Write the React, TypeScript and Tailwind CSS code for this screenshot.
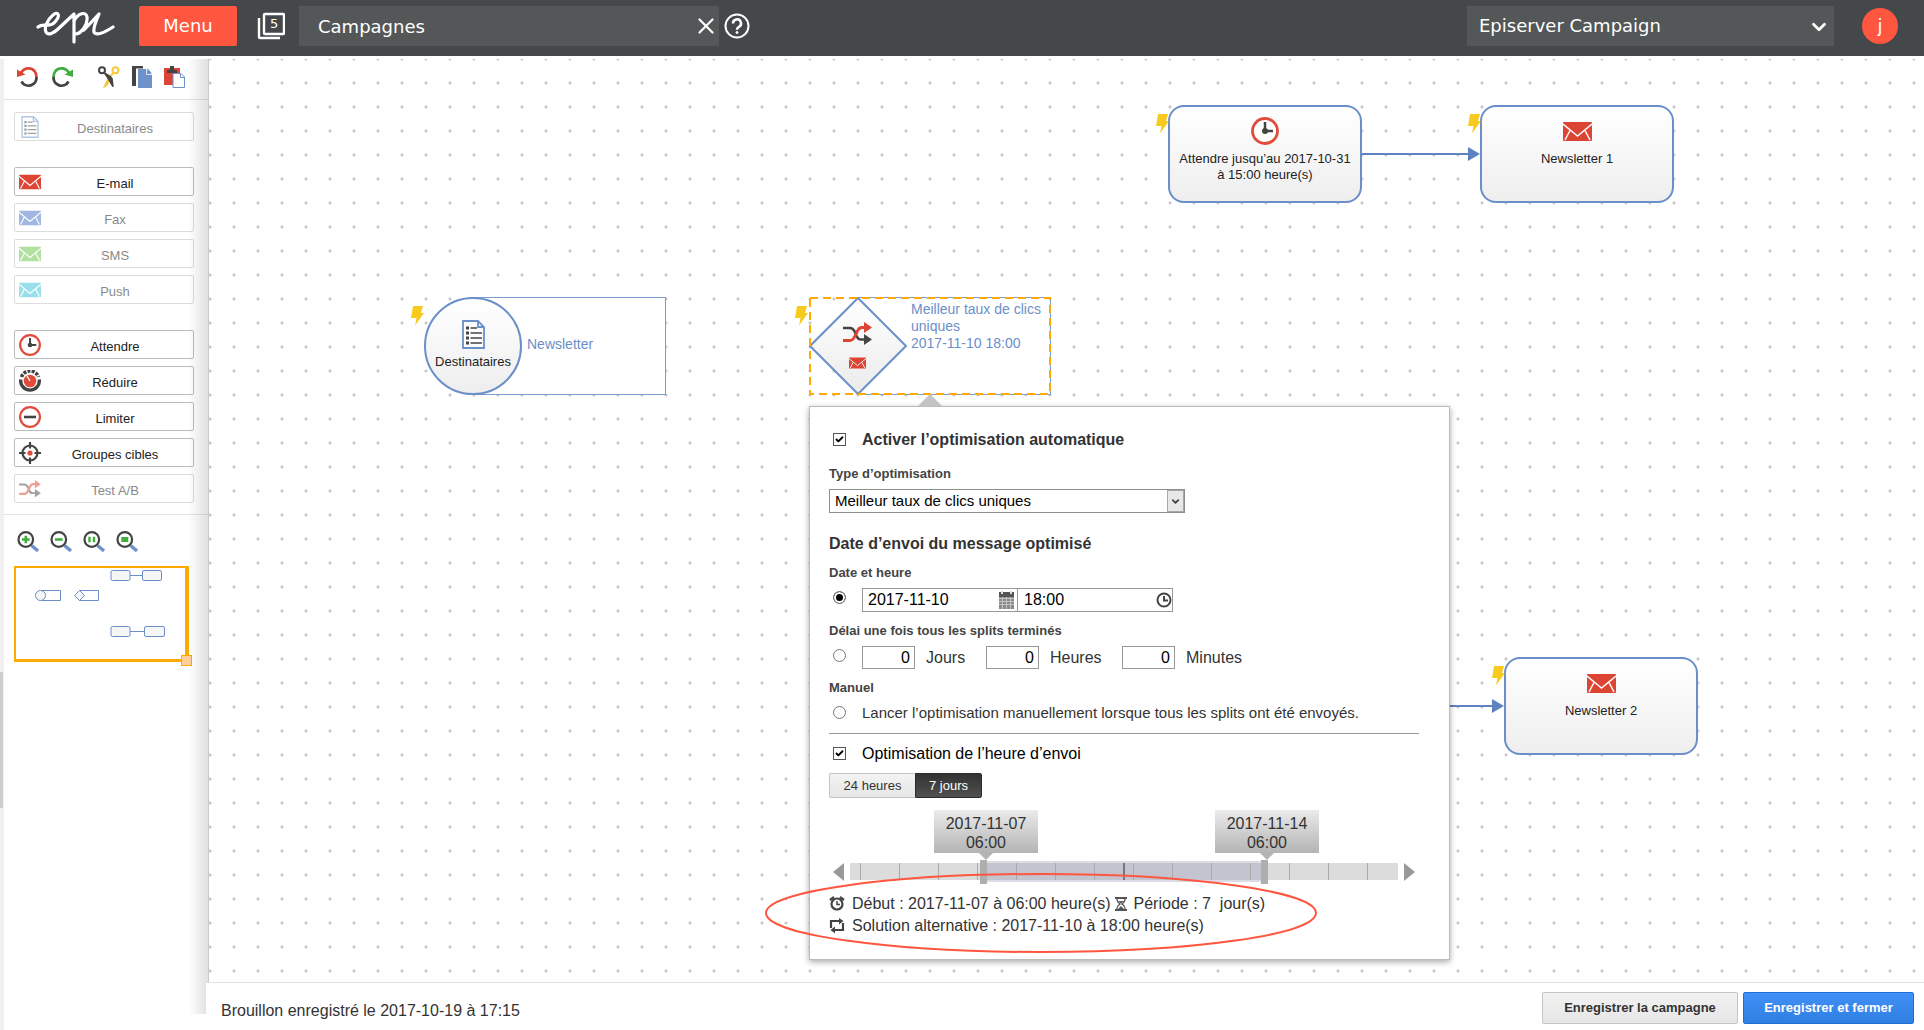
import React from "react";
import { Check, ChevronDown, X } from "lucide-react";

type IconProps = { className?: string };

/* ---------- Icons ---------- */

function Logo() {
  return (
    <svg width="80" height="34" viewBox="0 0 80 34" fill="none" stroke="#fff" strokeWidth="3.200" strokeLinecap="round" strokeLinejoin="round" aria-hidden="true">
      <path d="M2 16C8 11 13 18 19 11C25 4 22 0 17 4C11 9 8 17 10 21C12 25 18 22 22 18L38 3L38 31M38 10C42 2 50 0 51 6C52 13 46 22 40 23M48 19L63 3C59 12 57 17 58 21C60 25 68 22 77 16" />
    </svg>
  );
}

function TabsIcon() {
  return (
    <svg width="28" height="28" viewBox="0 0 28 28" fill="none" stroke="#fff" strokeWidth="2.400" aria-hidden="true">
      <rect x="7" y="2" width="20" height="20" rx="1" />
      <path d="M2 6V25a1 1 0 0 0 1 1H23" />
    </svg>
  );
}

function HelpIcon() {
  return (
    <svg width="26" height="26" viewBox="0 0 26 26" fill="none" stroke="#fff" strokeWidth="2" aria-hidden="true">
      <circle cx="13" cy="13" r="11.500" />
      <path d="M9 10.500a4 4 0 1 1 6 3.300c-1.500 1-2 1.500-2 3" strokeWidth="2.500" />
      <circle cx="13" cy="19.500" r="1" strokeWidth="1" fill="#fff" />
    </svg>
  );
}

function RotateIcon({ color, flip }: { color: string; flip?: boolean }) {
  return (
    <svg width="22" height="22" viewBox="0 0 22 22" fill="none" strokeWidth="2.800" aria-hidden="true">
      <g transform={flip ? "translate(22 0) scale(-1 1)" : undefined}>
        <path d="M4.500 15.500A8 8 0 0 0 19.500 11" stroke="#444" />
        <path d="M4 7C7 1.500 14 1 17.500 5Q19.500 7.500 19.500 11" stroke={color} />
        <path d="M0 3.500V11L8.500 8.500Z" fill={color} />
      </g>
    </svg>
  );
}

function ScissorsIcon() {
  return (
    <svg width="22" height="22" viewBox="0 0 22 22" fill="none" aria-hidden="true">
      <path d="M15 7L10.500 12L6.500 20.500L9 19L12.500 12Z" fill="#f9c63d" stroke="#f9c63d" strokeWidth="1.500" />
      <path d="M6.500 7L10 12L15 20.500L14 12.500L11.500 10Z" fill="#444" stroke="#444" strokeWidth="1.500" />
      <circle cx="4" cy="4.200" r="3" stroke="#444" strokeWidth="2" />
      <circle cx="17.500" cy="4.200" r="3" stroke="#f9c63d" strokeWidth="2" />
    </svg>
  );
}

function CopyIcon() {
  return (
    <svg width="22" height="22" viewBox="0 0 22 22" aria-hidden="true">
      <path d="M0 0H11V2.500H4V20H0Z" fill="#444" />
      <path d="M6 3H14L20 9V22H6Z" fill="#6f92cb" />
      <path d="M15.500 2L20 7.500H15.500Z" fill="#6f92cb" />
      <path d="M14.500 3V8.500H20" fill="none" stroke="#dfe8f5" />
    </svg>
  );
}

function PasteIcon() {
  return (
    <svg width="22" height="22" viewBox="0 0 22 22" aria-hidden="true">
      <path d="M0 2H16V19H0Z" fill="#dc4433" />
      <path d="M3 7V4H6V0H10V4H13V7Z" fill="#444" />
      <path d="M9 7.500H17L20.500 11V21.500H9Z" fill="#fff" stroke="#6f92cb" />
      <path d="M16.500 7.500V11.500H20.500" fill="none" stroke="#6f92cb" />
    </svg>
  );
}

function ListDocIcon({ className }: IconProps) {
  return (
    <svg className={className} viewBox="0 0 23 29" fill="none" aria-hidden="true">
      <path d="M1 1H16L22 7V28H1Z" fill="#fdfdfd" stroke="#6b8fc9" strokeWidth="1.800" />
      <path d="M16 1V7H22" stroke="#6b8fc9" strokeWidth="1.800" />
      <path d="M8.500 8H15M8.500 13H20M8.500 18H20M8.500 23H20" stroke="#444" strokeWidth="1.600" />
      <path d="M4 8H7M4 13H7M4 18H7M4 23H7" stroke="#444" strokeWidth="3" />
    </svg>
  );
}

function MailIcon({ className, color = "#dc4433" }: IconProps & { color?: string }) {
  return (
    <svg className={className} viewBox="0 0 29 19" fill="none" aria-hidden="true">
      <rect width="29" height="19" rx="1" fill={color} />
      <path d="M0 2L14.500 14L29 2" stroke="#fff" strokeWidth="1.500" />
      <path d="M7 8.500L2 18M22 8.500L27 18" stroke="#fff" strokeWidth="1.500" />
    </svg>
  );
}

function ClockIcon({ className }: IconProps) {
  return (
    <svg className={className} viewBox="0 0 28 28" fill="none" aria-hidden="true">
      <circle cx="14" cy="14" r="12.500" fill="#fff" stroke="#e04b3a" strokeWidth="2.800" />
      <path d="M14 5V14H22" stroke="#444" strokeWidth="2.500" />
      <circle cx="14" cy="14" r="3" fill="#444" />
    </svg>
  );
}

function ReduceIcon({ className }: IconProps) {
  return (
    <svg className={className} viewBox="0 0 22 22" fill="none" aria-hidden="true">
      <path d="M1.800 9.500A9.300 9.300 0 1 0 20.200 9.500" stroke="#444" strokeWidth="3.400" />
      <path d="M2.500 7A9 9 0 0 1 19.500 7" stroke="#444" strokeWidth="3.600" strokeDasharray="3 1.200" />
      <circle cx="11" cy="11" r="6.300" fill="#e04b3a" />
      <path d="M11 11L8 6" stroke="#fff" strokeWidth="1.300" />
    </svg>
  );
}

function LimitIcon({ className }: IconProps) {
  return (
    <svg className={className} viewBox="0 0 22 22" fill="none" aria-hidden="true">
      <circle cx="11" cy="11" r="9.900" stroke="#e04b3a" strokeWidth="2.200" />
      <path d="M5 11H17" stroke="#444" strokeWidth="2.600" />
    </svg>
  );
}

function TargetIcon({ className }: IconProps) {
  return (
    <svg className={className} viewBox="0 0 22 22" fill="none" aria-hidden="true">
      <circle cx="11" cy="11" r="7.500" stroke="#444" strokeWidth="2.200" />
      <path d="M11 0V6.500M11 15.500V22M0 11H6.500M15.500 11H22" stroke="#444" strokeWidth="2.200" />
      <circle cx="11" cy="11" r="2.600" fill="#e04b3a" />
    </svg>
  );
}

function ShuffleIcon({ className }: IconProps) {
  return (
    <svg className={className} viewBox="0 0 29 24" fill="none" aria-hidden="true">
      <path d="M0 6H7Q10 6 12 10L13.500 14Q15 17.500 18 17.500H22" stroke="#444" strokeWidth="2.600" />
      <path d="M21 12L29 17.500L21 23Z" fill="#444" />
      <path d="M0 18.500H7Q10 18.500 12 14L14.500 9Q16 5.500 19 5.500H22" stroke="#dc4433" strokeWidth="2.800" />
      <path d="M21 0L29 5.500L21 11Z" fill="#dc4433" />
    </svg>
  );
}

function Bolt({ className }: IconProps) {
  return (
    <svg className={className} width="13" height="20" viewBox="0 0 13 20" aria-hidden="true">
      <path d="M2 0H12L10 7H13L4 19.500L5.500 12H0Z" fill="#f7ca20" />
    </svg>
  );
}

function ZoomIcon({ kind }: { kind: "in" | "out" | "actual" | "fit" }) {
  return (
    <svg width="22" height="22" viewBox="0 0 22 22" fill="none" aria-hidden="true">
      <path d="M14.500 14.500L21 20" stroke="#6f92cb" strokeWidth="3.400" />
      <circle cx="8.800" cy="8.500" r="7.300" fill="#fff" stroke="#444" strokeWidth="2.200" />
      {kind === "in" && <path d="M8.800 4.700V12.300M5 8.500H12.600" stroke="#3fae3f" strokeWidth="2.600" />}
      {kind === "out" && <path d="M5 8.500H12.600" stroke="#3fae3f" strokeWidth="2.600" />}
      {kind === "actual" && <path d="M6.500 5.800V11.200M11 5.800V11.200" stroke="#3fae3f" strokeWidth="2.400" />}
      {kind === "fit" && <rect x="5.300" y="6" width="7" height="5" fill="#3fae3f" />}
    </svg>
  );
}

function CalendarIcon({ className }: IconProps) {
  return (
    <svg className={className} width="15" height="18" viewBox="0 0 15 18" aria-hidden="true">
      <rect y="1" width="15" height="17" fill="#8a8a8a" />
      <rect y="1" width="15" height="5" fill="#555" />
      <path d="M3 0V3M12 0V3" stroke="#ddd" strokeWidth="2" />
      <path d="M0 7.500H15M0 10.500H15M0 13.500H15M3.500 6V18M7.500 6V18M11.500 6V18" stroke="#c4c4c4" strokeWidth="1" />
    </svg>
  );
}

function SmallClockIcon({ className }: IconProps) {
  return (
    <svg className={className} width="16" height="16" viewBox="0 0 16 16" fill="none" stroke="#444" aria-hidden="true">
      <circle cx="8" cy="8" r="6.500" strokeWidth="2" />
      <path d="M8 4V8.500H12" strokeWidth="2" />
    </svg>
  );
}

function AlarmIcon() {
  return (
    <svg width="16" height="16" viewBox="0 0 16 16" fill="none" stroke="#444" aria-hidden="true">
      <circle cx="8" cy="8" r="5.500" strokeWidth="2.200" />
      <path d="M8 5V8.500H11" strokeWidth="1.500" />
      <path d="M1 4L5 1M15 4L11 1" strokeWidth="2.200" />
    </svg>
  );
}

function HourglassIcon() {
  return (
    <svg width="12" height="15" viewBox="0 0 12 15" fill="none" stroke="#555" aria-hidden="true">
      <path d="M0 1H12M0 13H12" strokeWidth="2" />
      <path d="M2 2Q2 5 5 7Q2 9 2 12M10 2Q10 5 7 7Q10 9 10 12" strokeWidth="1.300" />
      <path d="M3.500 4H8.500L6 6.500ZM3 12L6 9L9 12Z" fill="#555" stroke="none" />
    </svg>
  );
}

function RepeatIcon() {
  return (
    <svg width="16" height="16" viewBox="0 0 16 16" fill="none" stroke="#444" strokeWidth="2.200" aria-hidden="true">
      <path d="M2 10V3H11M14 5V12H5" />
      <path d="M10 0L14.500 3L10 6.500ZM6 8.500L1.500 12L6 15.500Z" fill="#444" stroke="none" />
    </svg>
  );
}

/* ---------- Sidebar ---------- */

type Tool = { label: string; icon: React.ReactNode; disabled?: boolean };

const groups: Tool[][] = [
  [{ label: "Destinataires", icon: <ListDocIcon className="h-[22px] w-5" />, disabled: true }],
  [
    { label: "E-mail", icon: <MailIcon className="h-4 w-[22px]" /> },
    { label: "Fax", icon: <MailIcon className="h-4 w-[22px]" color="#4472c4" />, disabled: true },
    { label: "SMS", icon: <MailIcon className="h-4 w-[22px]" color="#66c244" />, disabled: true },
    { label: "Push", icon: <MailIcon className="h-4 w-[22px]" color="#38c3da" />, disabled: true },
  ],
  [
    { label: "Attendre", icon: <ClockIcon className="size-[22px]" /> },
    { label: "Réduire", icon: <ReduceIcon className="size-[22px]" /> },
    { label: "Limiter", icon: <LimitIcon className="size-[22px]" /> },
    { label: "Groupes cibles", icon: <TargetIcon className="size-[22px]" /> },
    { label: "Test A/B", icon: <ShuffleIcon className="h-[18px] w-[22px]" />, disabled: true },
  ],
];

function ToolButton({ label, icon, disabled }: Tool) {
  return (
    <button
      type="button"
      disabled={disabled}
      className="flex h-[29px] w-full items-center rounded-xs border border-[#bcbcbc] bg-white px-1 text-[13px] text-[#222] disabled:border-[#dcdcdc] disabled:text-[#8a8a8a]"
    >
      <span className={disabled ? "flex w-[22px] justify-center opacity-50" : "flex w-[22px] justify-center"}>{icon}</span>
      <span className="flex-1 pt-1 text-center leading-4">{label}</span>
    </button>
  );
}

function MiniMap() {
  return (
    <button type="button" aria-label="Vue d’ensemble" className="relative mt-[13px] ml-[10px] block w-[175px] border-t-2 border-r-4 border-b-3 border-l-2 border-[#fa0] bg-white">
      <svg className="block" width="169" height="91" viewBox="0 0 169 91" fill="#f6f6f6" stroke="#6b8fc9" aria-hidden="true">
        <path d="M114 7.500H126M114 63.500H129" />
        <rect x="95" y="2.500" width="19" height="10" rx="1.500" />
        <rect x="126.500" y="2.500" width="19" height="10" rx="1.500" />
        <rect x="95" y="58.500" width="19" height="10" rx="1.500" />
        <rect x="128.500" y="58.500" width="20" height="10" rx="1.500" />
        <path d="M25 22.500H44.500V32.500H25" fill="#fff" />
        <circle cx="24.500" cy="27.500" r="5" />
        <path d="M63 22.500H82.500V32.500H63" fill="#fff" />
        <path d="M63.500 22.500L68.500 27.500L63.500 32.500L58.500 27.500Z" />
      </svg>
      <span className="absolute -right-[7px] -bottom-[7px] size-[11px] border border-[#fa0] bg-[#ffcf9a]" />
    </button>
  );
}

function Sidebar() {
  return (
    <aside className="relative flex w-[209px] shrink-0 border-r border-[#c9c9c9] bg-white">
      <div className="w-1 shrink-0 bg-[#f0f0f0]">
        <div className="mt-[613px] h-[136px] w-[3px] bg-[#cdcdcd]" />
      </div>
      <div className="flex-1">
        <div className="flex h-[41px] items-start border-b border-[#e4e4e4] pt-[7px] pl-[13px]">
          <button type="button" aria-label="Annuler"><RotateIcon color="#dc4433" /></button>
          <button type="button" aria-label="Rétablir" className="ml-3"><RotateIcon color="#3fae3f" flip /></button>
          <button type="button" aria-label="Couper" className="ml-[25px]"><ScissorsIcon /></button>
          <button type="button" aria-label="Copier" className="ml-3"><CopyIcon /></button>
          <button type="button" aria-label="Coller" className="ml-[10px]"><PasteIcon /></button>
        </div>
        <div className="flex flex-col gap-[26px] border-b border-[#e4e4e4] pt-3 pr-[14px] pb-[11px] pl-[10px]">
          {groups.map((group, i) => (
            <div key={i} className="flex flex-col gap-[7px]">
              {group.map((tool) => (
                <ToolButton key={tool.label} {...tool} />
              ))}
            </div>
          ))}
        </div>
        <div className="flex gap-[11px] pt-4 pl-[13px]">
          <button type="button" aria-label="Zoom avant"><ZoomIcon kind="in" /></button>
          <button type="button" aria-label="Zoom arrière"><ZoomIcon kind="out" /></button>
          <button type="button" aria-label="Taille réelle"><ZoomIcon kind="actual" /></button>
          <button type="button" aria-label="Ajuster"><ZoomIcon kind="fit" /></button>
        </div>
        <MiniMap />
      </div>
      <div className="pointer-events-none absolute top-0 right-0 bottom-4 w-5 bg-linear-to-r from-transparent to-black/12" />
    </aside>
  );
}

/* ---------- Canvas nodes ---------- */

function ActionNode({ className, icon, children }: { className: string; icon: React.ReactNode; children: React.ReactNode }) {
  return (
    <div className={`absolute flex h-[98px] w-[194px] flex-col items-center rounded-2xl border-2 border-[#6b8fc9] bg-linear-to-b from-white to-[#eee] pt-[10px] text-[13px] text-[#222] ${className}`}>
      <Bolt className="absolute top-[7px] -left-[14px]" />
      <div className="flex h-7 items-center">{icon}</div>
      <div className="mt-[6px] text-center leading-4">{children}</div>
    </div>
  );
}

function Connector({ className }: IconProps) {
  return (
    <svg className={`absolute ${className}`} width="118" height="14" viewBox="0 0 118 14" aria-hidden="true">
      <path d="M0 7H108" stroke="#5f83c0" strokeWidth="2" />
      <path d="M106 0L118 7L106 14Z" fill="#5f83c0" />
    </svg>
  );
}

function RecipientNode() {
  return (
    <div className="absolute top-[238px] left-[215px] flex h-[98px] w-[242px] items-center">
      <div className="absolute inset-y-0 right-0 left-[49px] border border-[#7b9bd3] bg-white" />
      <Bolt className="absolute top-[9px] -left-[13px]" />
      <div className="relative flex size-[98px] flex-col items-center rounded-full border-2 border-[#6b8fc9] bg-linear-to-b from-white to-[#eee] pt-[21px] text-[13px] text-[#222]">
        <ListDocIcon className="h-[29px] w-[23px]" />
        <span className="mt-[5px] leading-4">Destinataires</span>
      </div>
      <span className="relative ml-[5px] pb-1 text-[14px] leading-[17px] text-[#6b8fc9]">Newsletter</span>
    </div>
  );
}

function SplitNode() {
  return (
    <div className="absolute top-[238px] left-[600px] flex h-[98px] w-[242px]">
      <svg className="absolute inset-0" width="242" height="98" viewBox="0 0 242 98" fill="none" aria-hidden="true">
        <defs>
          <linearGradient id="split" x1="0" y1="0" x2="0" y2="1">
            <stop offset="0" stopColor="#fff" />
            <stop offset="1" stopColor="#ebebeb" />
          </linearGradient>
        </defs>
        <path d="M49 .5H241.500V97.500H49Z" fill="#fff" stroke="#7b9bd3" />
        <path d="M49 1L97 49L49 97L1 49Z" fill="url(#split)" stroke="#6b8fc9" strokeWidth="2" />
        <rect x="1" y="1" width="240" height="96" stroke="#fa0" strokeWidth="2" strokeDasharray="8 5" />
      </svg>
      <Bolt className="absolute top-[9px] -left-[14px]" />
      <div className="relative flex w-24 flex-col items-center pt-[25px]">
        <ShuffleIcon className="h-6 w-[29px]" />
        <MailIcon className="mt-[11px] h-3 w-[17px]" />
      </div>
      <div className="relative flex-1 pt-1 pl-[6px] text-[14px] leading-[17px] text-[#6b8fc9]">
        <p>Meilleur taux de clics uniques</p>
        <p>2017-11-10 18:00</p>
      </div>
    </div>
  );
}

/* ---------- Optimisation popup ---------- */

function CheckRow({ label, id, bold }: { label: string; id: string; bold?: boolean }) {
  return (
    <div className="flex h-5 items-start">
      <div className="relative mt-[3px] ml-1 w-[29px]">
        <input id={id} type="checkbox" defaultChecked className="peer block size-[13px] appearance-none border border-[#555] bg-white" />
        <Check className="pointer-events-none absolute top-0.5 left-0.5 hidden size-[9px] text-black peer-checked:block" strokeWidth={5} />
      </div>
      <label htmlFor={id} className={bold ? "text-base leading-5 font-bold text-[#333]" : "text-base leading-5 text-black"}>{label}</label>
    </div>
  );
}

function ModeRadio({ id, label, checked }: { id: string; label: string; checked?: boolean }) {
  return (
    <div className="w-[33px] shrink-0 pt-[3px] pl-1">
      <input
        id={id}
        type="radio"
        name="mode"
        aria-label={label}
        defaultChecked={checked}
        className="block size-[13px] appearance-none rounded-full border border-[#777] bg-white checked:bg-black checked:shadow-[inset_0_0_0_2px_white]"
      />
    </div>
  );
}

function DelayField({ label, className }: { label: string; className: string }) {
  return (
    <label className={`flex items-center text-base leading-[23px] text-[#333] ${className}`}>
      <input defaultValue="0" className="mr-[11px] h-[23px] w-[53px] border border-[#999] bg-white px-1 text-right text-black" />
      {label}
    </label>
  );
}

function TimeFlag({ date, time, className }: { date: string; time: string; className: string }) {
  return (
    <div className={`absolute top-0 w-[104px] bg-linear-to-b from-[#ebebeb] to-[#b4b4b4] pt-1 pb-px text-center text-base leading-[19px] text-[#333] ${className}`}>
      {date}
      <br />
      {time}
      <span className="absolute top-full left-[45px] border-x-7 border-t-7 border-x-transparent border-t-[#b4b4b4]" />
    </div>
  );
}

const ticks = Array.from({ length: 14 }, (_, i) => 10 + i * 39);

const thumb =
  "pointer-events-none absolute inset-x-0 top-[50px] h-6 w-full appearance-none bg-transparent [&::-webkit-slider-thumb]:pointer-events-auto [&::-webkit-slider-thumb]:h-6 [&::-webkit-slider-thumb]:w-[7px] [&::-webkit-slider-thumb]:appearance-none [&::-webkit-slider-thumb]:bg-[#aeaeae]";

function PeriodSlider() {
  return (
    <div className="mt-3 flex h-[75px] items-start">
      <button type="button" aria-label="Période précédente" className="mt-[53px] ml-1 border-y-9 border-r-11 border-y-transparent border-r-[#999]" />
      <div className="relative mx-[6px] h-full w-[548px]">
        <div className="absolute inset-x-0 top-[53px] h-[17px] bg-[#dcdcdc]">
          <div className="absolute -top-0.5 left-[130px] h-[21px] w-[288px] bg-[#dcdce6]" />
          <div className="absolute top-0 left-[130px] h-[17px] w-[288px] bg-[#c4c4d0]" />
          {ticks.map((x) => (
            <span key={x} className="absolute top-0 h-full w-px bg-[#aaa]" style={{ left: x }} />
          ))}
          <span className="absolute top-0 left-[273px] h-full w-0.5 bg-[#777]" />
        </div>
        <input type="range" aria-label="Début" min={0} max={541} defaultValue={130} className={thumb} />
        <input type="range" aria-label="Fin" min={0} max={541} defaultValue={411} className={thumb} />
        <TimeFlag className="left-[84px]" date="2017-11-07" time="06:00" />
        <TimeFlag className="left-[365px]" date="2017-11-14" time="06:00" />
      </div>
      <button type="button" aria-label="Période suivante" className="mt-[53px] border-y-9 border-l-11 border-y-transparent border-l-[#999]" />
    </div>
  );
}

function OptimisationPopup() {
  return (
    <section className="absolute top-[347px] left-[600px] w-[641px] border border-[#bbb] bg-white pt-[23px] pr-[30px] pb-[22px] pl-[19px] shadow-[0_2px_6px_rgba(0,0,0,0.35)]">
      <span className="absolute -top-[13px] left-[108px] border-x-12 border-b-12 border-x-transparent border-b-[#c4c4c4]" />
      <CheckRow id="auto" label="Activer l’optimisation automatique" bold />

      <label htmlFor="type" className="mt-4 block text-[13px] leading-4 font-bold text-[#444]">Type d’optimisation</label>
      <div className="relative mt-[7px] h-6 w-[356px]">
        <select id="type" className="block h-6 w-full appearance-none border border-[#8f8f8f] bg-white pl-[5px] text-[15px] text-black">
          <option>Meilleur taux de clics uniques</option>
        </select>
        <span className="pointer-events-none absolute top-px right-px flex h-[22px] w-[17px] items-center justify-center border border-[#a8a8a8] bg-[#e8e8e8]">
          <ChevronDown className="size-[11px] text-[#444]" strokeWidth={4} />
        </span>
      </div>

      <h2 className="mt-[21px] text-base leading-5 font-bold text-[#333]">Date d’envoi du message optimisé</h2>
      <h3 className="mt-[11px] text-[13px] leading-4 font-bold text-[#444]">Date et heure</h3>
      <div className="mt-[7px] flex h-6">
        <ModeRadio id="mode-date" label="Date et heure" checked />
        <div className="relative">
          <input aria-label="Date" defaultValue="2017-11-10" className="h-6 w-[156px] border border-[#999] bg-white pl-[5px] text-base text-black" />
          <CalendarIcon className="absolute top-[3px] right-1" />
        </div>
        <div className="relative -ml-px">
          <input aria-label="Heure" defaultValue="18:00" className="h-6 w-[156px] border border-[#999] bg-white pl-[6px] text-base text-black" />
          <SmallClockIcon className="absolute top-1 right-px" />
        </div>
      </div>

      <h3 className="mt-[11px] text-[13px] leading-4 font-bold text-[#444]">Délai une fois tous les splits terminés</h3>
      <div className="mt-[7px] flex h-[23px] items-start">
        <ModeRadio id="mode-delay" label="Délai" />
        <DelayField label="Jours" className="w-[124px]" />
        <DelayField label="Heures" className="w-[136px]" />
        <DelayField label="Minutes" className="" />
      </div>

      <h3 className="mt-[11px] text-[13px] leading-4 font-bold text-[#444]">Manuel</h3>
      <div className="mt-[7px] flex h-5 items-start">
        <ModeRadio id="mode-manual" label="Manuel" />
        <label htmlFor="mode-manual" className="text-[15px] leading-5 whitespace-nowrap text-[#333]">Lancer l’optimisation manuellement lorsque tous les splits ont été envoyés.</label>
      </div>

      <hr className="my-[10px] border-t border-[#999]" />

      <CheckRow id="send-time" label="Optimisation de l’heure d’envoi" />
      <div className="mt-[9px] flex h-[25px] text-[13px]">
        <button type="button" className="w-[86px] rounded-l-xs border border-r-0 border-[#c4c4c4] bg-linear-to-b from-[#f3f3f3] to-[#e6e6e6] text-[#333]">24 heures</button>
        <button type="button" className="w-[67px] rounded-r-xs border border-[#2c2c2c] bg-linear-to-b from-[#333] to-[#505050] text-white">7 jours</button>
      </div>

      <PeriodSlider />

      <div className="mt-2 flex h-[22px] items-center text-base text-[#333]">
        <AlarmIcon />
        <span className="ml-[7px] whitespace-nowrap">Début : 2017-11-07 à 06:00 heure(s)</span>
        <span className="ml-1"><HourglassIcon /></span>
        <span className="ml-[7px] whitespace-pre">{"Période : 7  jour(s)"}</span>
      </div>
      <div className="flex h-[22px] items-center text-base text-[#333]">
        <RepeatIcon />
        <span className="ml-[7px] whitespace-nowrap">Solution alternative : 2017-11-10 à 18:00 heure(s)</span>
      </div>
    </section>
  );
}

/* ---------- Page ---------- */

function Header() {
  return (
    <header className="flex h-14 shrink-0 items-center bg-[#44484a] pr-[26px] pl-9 font-['DejaVu_Sans',sans-serif] text-lg text-white">
      <a href="#accueil" aria-label="Episerver"><Logo /></a>
      <button type="button" className="-mt-1 ml-[23px] h-10 w-[98px] rounded-xs bg-[#ff5640]">Menu</button>
      <button type="button" aria-label="Onglets" className="relative -mt-1 ml-5">
        <TabsIcon />
        <span className="absolute top-[3px] left-[13px] text-[13px] leading-[18px]">5</span>
      </button>
      <div className="relative -mt-1 ml-[14px]">
        <input aria-label="Recherche" defaultValue="Campagnes" className="h-10 w-[420px] bg-[#535758] pl-[19px]" />
        <button type="button" aria-label="Effacer" className="absolute top-[7px] right-0"><X className="size-[26px]" strokeWidth={2} /></button>
      </div>
      <button type="button" aria-label="Aide" className="-mt-1 ml-[5px]"><HelpIcon /></button>
      <div className="relative -mt-1 ml-auto">
        <select aria-label="Produit" className="block h-10 w-[367px] appearance-none bg-[#535758] pl-3">
          <option>Episerver Campaign</option>
        </select>
        <ChevronDown className="pointer-events-none absolute top-[10px] right-1 size-[22px]" strokeWidth={3} />
      </div>
      <button type="button" className="-mt-1 ml-7 size-9 rounded-full bg-[#ff5640]">j</button>
    </header>
  );
}

export default function App() {
  return (
    <div className="flex min-h-screen flex-col bg-white font-['Liberation_Sans',Arial,sans-serif] text-[#333]">
      <Header />
      <div className="flex flex-1 pt-[3px]">
        <Sidebar />
        <main className="flex min-w-0 flex-1 flex-col">
          <div className="relative min-h-[910px] flex-1 overflow-hidden bg-[radial-gradient(circle,#c8c8c8_1px,transparent_2px)] bg-[size:24px_24px] bg-[position:13px_12px]">
            <Connector className="top-[88px] left-[1153px]" />
            <Connector className="top-[640px] left-[1177px]" />
            <ActionNode className="top-[46px] left-[959px]" icon={<ClockIcon className="size-7" />}>
              Attendre jusqu’au 2017-10-31
              <br />à 15:00 heure(s)
            </ActionNode>
            <ActionNode className="top-[46px] left-[1271px]" icon={<MailIcon className="h-[19px] w-[29px]" />}>Newsletter 1</ActionNode>
            <ActionNode className="top-[598px] left-[1295px]" icon={<MailIcon className="h-[19px] w-[29px]" />}>Newsletter 2</ActionNode>
            <RecipientNode />
            <SplitNode />
            <OptimisationPopup />
            <svg className="pointer-events-none absolute top-[814px] left-[555px]" width="554" height="80" viewBox="0 0 554 80" fill="none" aria-hidden="true">
              <ellipse cx="277" cy="40" rx="275" ry="39" stroke="#ff5640" strokeWidth="2" />
            </svg>
          </div>
          <footer className="relative -ml-[3px] flex h-12 shrink-0 items-center border-t border-[#e0e0e0] bg-white pr-[10px] pl-[15px]">
            <p className="pt-2 text-base">Brouillon enregistré le 2017-10-19 à 17:15</p>
            <button type="button" className="mt-0.5 ml-auto h-8 w-[196px] rounded-xs border border-[#c4c4c4] bg-linear-to-b from-[#f2f2f2] to-[#e6e6e6] text-[13px] font-bold text-[#333]">Enregistrer la campagne</button>
            <button type="button" className="mt-0.5 ml-[5px] h-8 w-[171px] rounded-xs border border-[#1d6fd8] bg-linear-to-b from-[#4090f5] to-[#2f7fe3] text-[13px] font-bold text-white">Enregistrer et fermer</button>
          </footer>
        </main>
      </div>
    </div>
  );
}
